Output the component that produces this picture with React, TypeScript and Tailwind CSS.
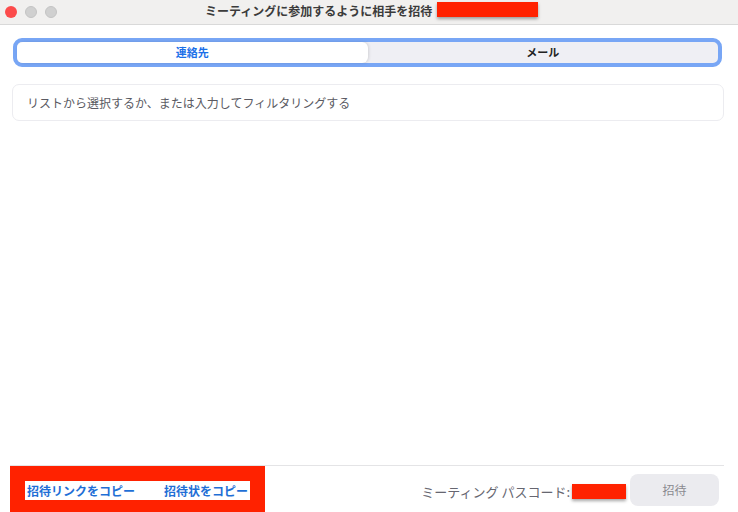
import React from "react"

const font = { fontFamily: '"Noto Sans CJK JP", "Noto Sans", sans-serif' }

function TitleBar() {
  return (
    <div className="relative flex h-[25px] items-center border-b border-[#d9d9d9] bg-[#f1f0ef]">
      <div className="flex items-center gap-[8px] pl-[5px]">
        <span className="h-[12px] w-[12px] rounded-full bg-[#fc4b4b]" />
        <span className="h-[12px] w-[12px] rounded-full bg-[#d0d0d0] border border-[#c4c4c4]" />
        <span className="h-[12px] w-[12px] rounded-full bg-[#d0d0d0] border border-[#c4c4c4]" />
      </div>
      <div className="absolute left-[205px] top-0 flex h-[22px] items-center gap-[5px]">
        <span className="text-[12px] font-bold text-[#3b3b3b]">ミーティングに参加するように相手を招待</span>
        <span className="mt-[-4px] h-[15px] w-[101px] bg-[#ff2200] shadow-[0_2px_3px_rgba(0,0,0,0.35)]" />
      </div>
    </div>
  )
}

function Tabs() {
  return (
    <div className="ml-[13px] mr-[16px] mt-[13px] flex h-[29px] rounded-[9px] border-[4px] border-[#78a6f5] bg-[#efeff4]">
      <div className="flex flex-1 items-center justify-center rounded-[6px] bg-white shadow-[1px_0_3px_rgba(0,0,0,0.12)] text-[11px] font-bold text-[#1a6fe8]">
        連絡先
      </div>
      <div className="flex flex-1 items-center justify-center text-[11px] font-bold text-[#222]">
        メール
      </div>
    </div>
  )
}

export default function App() {
  return (
    <div className="flex h-[512px] w-[738px] flex-col overflow-hidden bg-white" style={font}>
      <TitleBar />
      <Tabs />
      <div className="ml-[12px] mr-[14px] mt-[17px] flex h-[37px] items-center rounded-[7px] border border-[#ececf0] px-[14px] text-[12px] text-[#5a5a62]">
        リストから選択するか、または入力してフィルタリングする
      </div>
      <div className="flex-1" />
      <div className="ml-[10px] mr-[14px] flex h-[47px] border-t border-[#e4e4e6]">
        <div className="flex h-[47px] w-[255px] items-start bg-[#ff2200] pl-[15px] pt-[15px]">
          <div className="flex h-[19px] w-[225px] items-center gap-[29px] bg-white pl-[2px] text-[12px] font-bold text-[#1f6fd6]">
            <span>招待リンクをコピー</span>
            <span>招待状をコピー</span>
          </div>
        </div>
        <div className="flex flex-1 items-start justify-end pr-[5px] pt-[8px]">
          <div className="mt-[8px] flex items-center">
            <span className="text-[13px] text-[#666670]">ミーティング パスコード:</span>
            <span className="ml-[2px] h-[15px] w-[54px] bg-[#ff2200] shadow-[0_2px_3px_rgba(0,0,0,0.35)]" />
          </div>
          <div className="ml-[4px] flex h-[32px] w-[89px] items-center justify-center rounded-[8px] bg-[#ebebef] text-[12px] text-[#8a8a8f]">
            招待
          </div>
        </div>
      </div>
    </div>
  )
}
